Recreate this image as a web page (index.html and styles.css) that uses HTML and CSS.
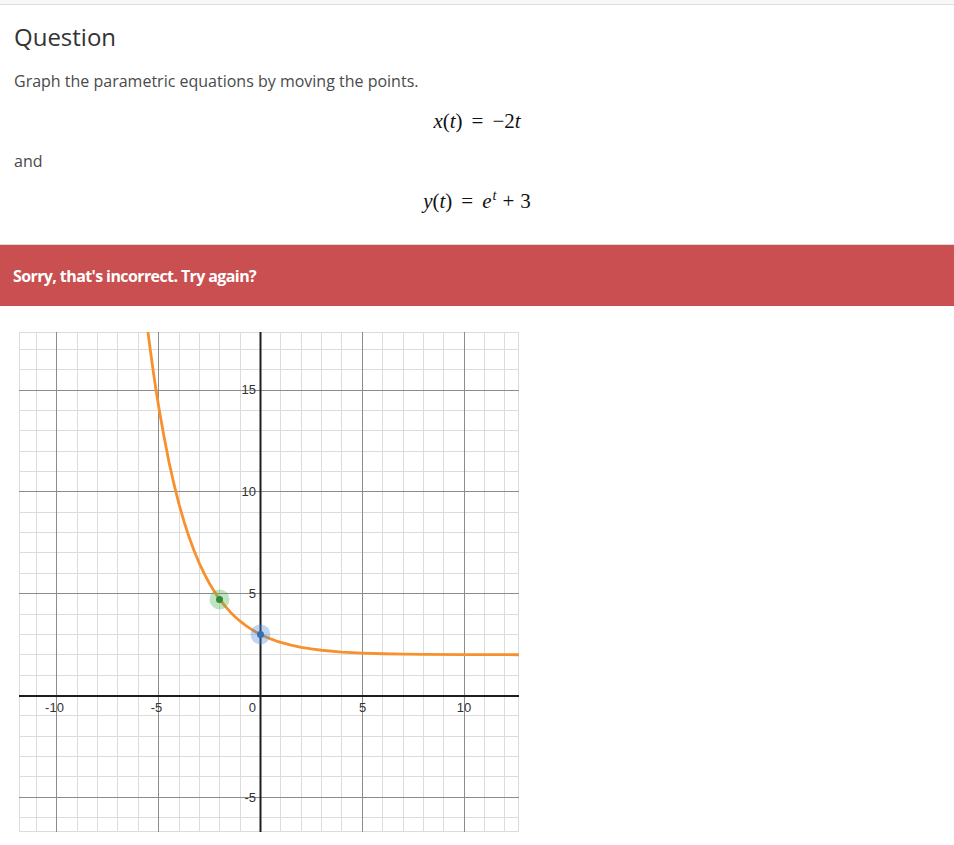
FILE: index.html
```html
<!DOCTYPE html>
<html lang="en">
<head>
<meta charset="utf-8">
<title>Question</title>
<link rel="stylesheet" href="styles.css">
</head>
<body>
<div class="topbar"></div>
<div class="content">
  <h2 class="title">Question</h2>
  <p class="text">Graph the parametric equations by moving the points.</p>
  <div class="math-display"><span class="math"><i>x</i>(<i>t</i>)<span class="rel">=</span>−2<i>t</i></span></div>
  <p class="text">and</p>
  <div class="math-display"><span class="math"><i>y</i>(<i>t</i>)<span class="rel">=</span><i>e</i><sup><i>t</i></sup><span class="bin">+</span>3</span></div>
</div>
<div class="banner">Sorry, that's incorrect. Try again?</div>
<div class="graph-wrap">
  <svg class="graph" width="500" height="500" viewBox="0 0 500 500">
    <rect x="0.5" y="0.5" width="499" height="499" class="g-border"/>
    <path class="g-minor" d="M17.5 0V500M58.5 0V500M78.5 0V500M98.5 0V500M119.5 0V500M160.5 0V500M180.5 0V500M200.5 0V500M221.5 0V500M261.5 0V500M282.5 0V500M302.5 0V500M322.5 0V500M363.5 0V500M384.5 0V500M404.5 0V500M424.5 0V500M465.5 0V500M485.5 0V500M0 485.5H500M0 444.5H500M0 424.5H500M0 404.5H500M0 383.5H500M0 343.5H500M0 322.5H500M0 302.5H500M0 282.5H500M0 241.5H500M0 220.5H500M0 200.5H500M0 180.5H500M0 139.5H500M0 119.5H500M0 98.5H500M0 78.5H500M0 37.5H500M0 17.5H500"/>
    <path class="g-major" d="M37.5 0V500M139.5 0V500M343.5 0V500M445.5 0V500M0 465.5H500M0 261.5H500M0 159.5H500M0 58.5H500"/>
    <path class="g-axis" d="M0 364H500M241.5 0V500"/>
    <g class="g-label">
      <text x="237" y="61.5" text-anchor="end">15</text>
      <text x="237" y="164" text-anchor="end">10</text>
      <text x="237" y="265.5" text-anchor="end">5</text>
      <text x="237" y="470" text-anchor="end">-5</text>
      <text x="35.5" y="379.5" text-anchor="middle">-10</text>
      <text x="137.5" y="379.5" text-anchor="middle">-5</text>
      <text x="237" y="379.5" text-anchor="end">0</text>
      <text x="343.5" y="379.5" text-anchor="middle">5</text>
      <text x="445" y="379.5" text-anchor="middle">10</text>
    </g>
    <polyline class="g-curve" points="128.97,0 131.56,19.82 134.61,41.81 137.2,59.3 139.7,74.75 144.8,103.6 149.88,129.6 155,152.2 160.06,172.34 165.2,190.1 170.24,205.61 175.3,219.3 180.42,231.53 185.5,242.2 190.6,251.72 195.7,260 200.78,267.44 205.9,273.9 210.96,279.68 216,284.8 221.14,289.21 226.2,293.2 231.32,296.64 236.4,299.7 241.5,302.42 246.6,304.8 251.68,306.92 256.8,308.8 261.86,310.43 272.04,313.16 282.22,315.29 292.4,316.9 302.58,318.24 322.94,320.03 343.3,321.11 363.66,321.77 384,322.2 404.38,322.41 445.1,322.64 500,322.74"/>
    <circle class="pt-halo-green" cx="200.5" cy="267.4" r="10"/>
    <circle class="pt-dot-green" cx="200.5" cy="267.4" r="3.5"/>
    <circle class="pt-halo-blue" cx="241.5" cy="302.4" r="10"/>
    <circle class="pt-dot-blue" cx="241.5" cy="302.4" r="3.5"/>
  </svg>
</div>
</body>
</html>
```
FILE: styles.css
```css
html, body {
  margin: 0;
  padding: 0;
  background: #ffffff;
}
body {
  font-family: "Open Sans", "Liberation Sans", sans-serif;
  color: #444;
}
.topbar {
  height: 4px;
  background: #f7f7f7;
  border-bottom: 1px solid #dedede;
}
.content {
  padding: 0 14px;
}
.title {
  margin: 16px 0 0;
  font-size: 24px;
  line-height: 32px;
  font-weight: 400;
  color: #333;
}
.text {
  margin: 16px 0 0;
  font-size: 16px;
  line-height: 24px;
  color: #4a4a4a;
}
.math-display {
  margin: 16px 0 0;
  text-align: center;
  line-height: 24px;
  height: 24px;
}
.math {
  font-family: "Liberation Serif", "DejaVu Serif", serif;
  font-size: 21px;
  color: #111;
  white-space: nowrap;
}
.math i {
  font-style: italic;
}
.math .rel {
  padding: 0 9px;
}
.math .bin {
  padding: 0 6px;
}
.math sup {
  font-size: 0.68em;
  line-height: 0;
  vertical-align: 0.55em;
  margin-left: 1px;
}
.banner {
  margin-top: 31px;
  border-top: 1px solid #d8d8d8;
  height: 61px;
  background: #c94f50;
  color: #ffffff;
  display: flex;
  align-items: center;
  padding-left: 13px;
  font-size: 16px;
  font-weight: 700;
  letter-spacing: -0.6px;
}
.graph-wrap {
  margin-top: 26px;
  padding-left: 19px;
}
.graph {
  display: block;
}
.g-border {
  fill: #ffffff;
  stroke: #dcdcdc;
  stroke-width: 1;
}
.g-minor {
  stroke: #dcdcdc;
  stroke-width: 1;
  fill: none;
}
.g-major {
  stroke: #8c8c8c;
  stroke-width: 1;
  fill: none;
}
.g-axis {
  stroke: #1e1e1e;
  stroke-width: 2;
  fill: none;
}
.g-label text {
  font-family: "Liberation Sans", Arial, sans-serif;
  font-size: 13px;
  fill: #333;
}
.g-curve {
  fill: none;
  stroke: #f7912d;
  stroke-width: 2.8;
  stroke-linejoin: round;
}
.pt-halo-green {
  fill: #4caf50;
  fill-opacity: 0.35;
}
.pt-dot-green {
  fill: #2f8b3a;
}
.pt-halo-blue {
  fill: #4a86d0;
  fill-opacity: 0.35;
}
.pt-dot-blue {
  fill: #3570b6;
}
```
